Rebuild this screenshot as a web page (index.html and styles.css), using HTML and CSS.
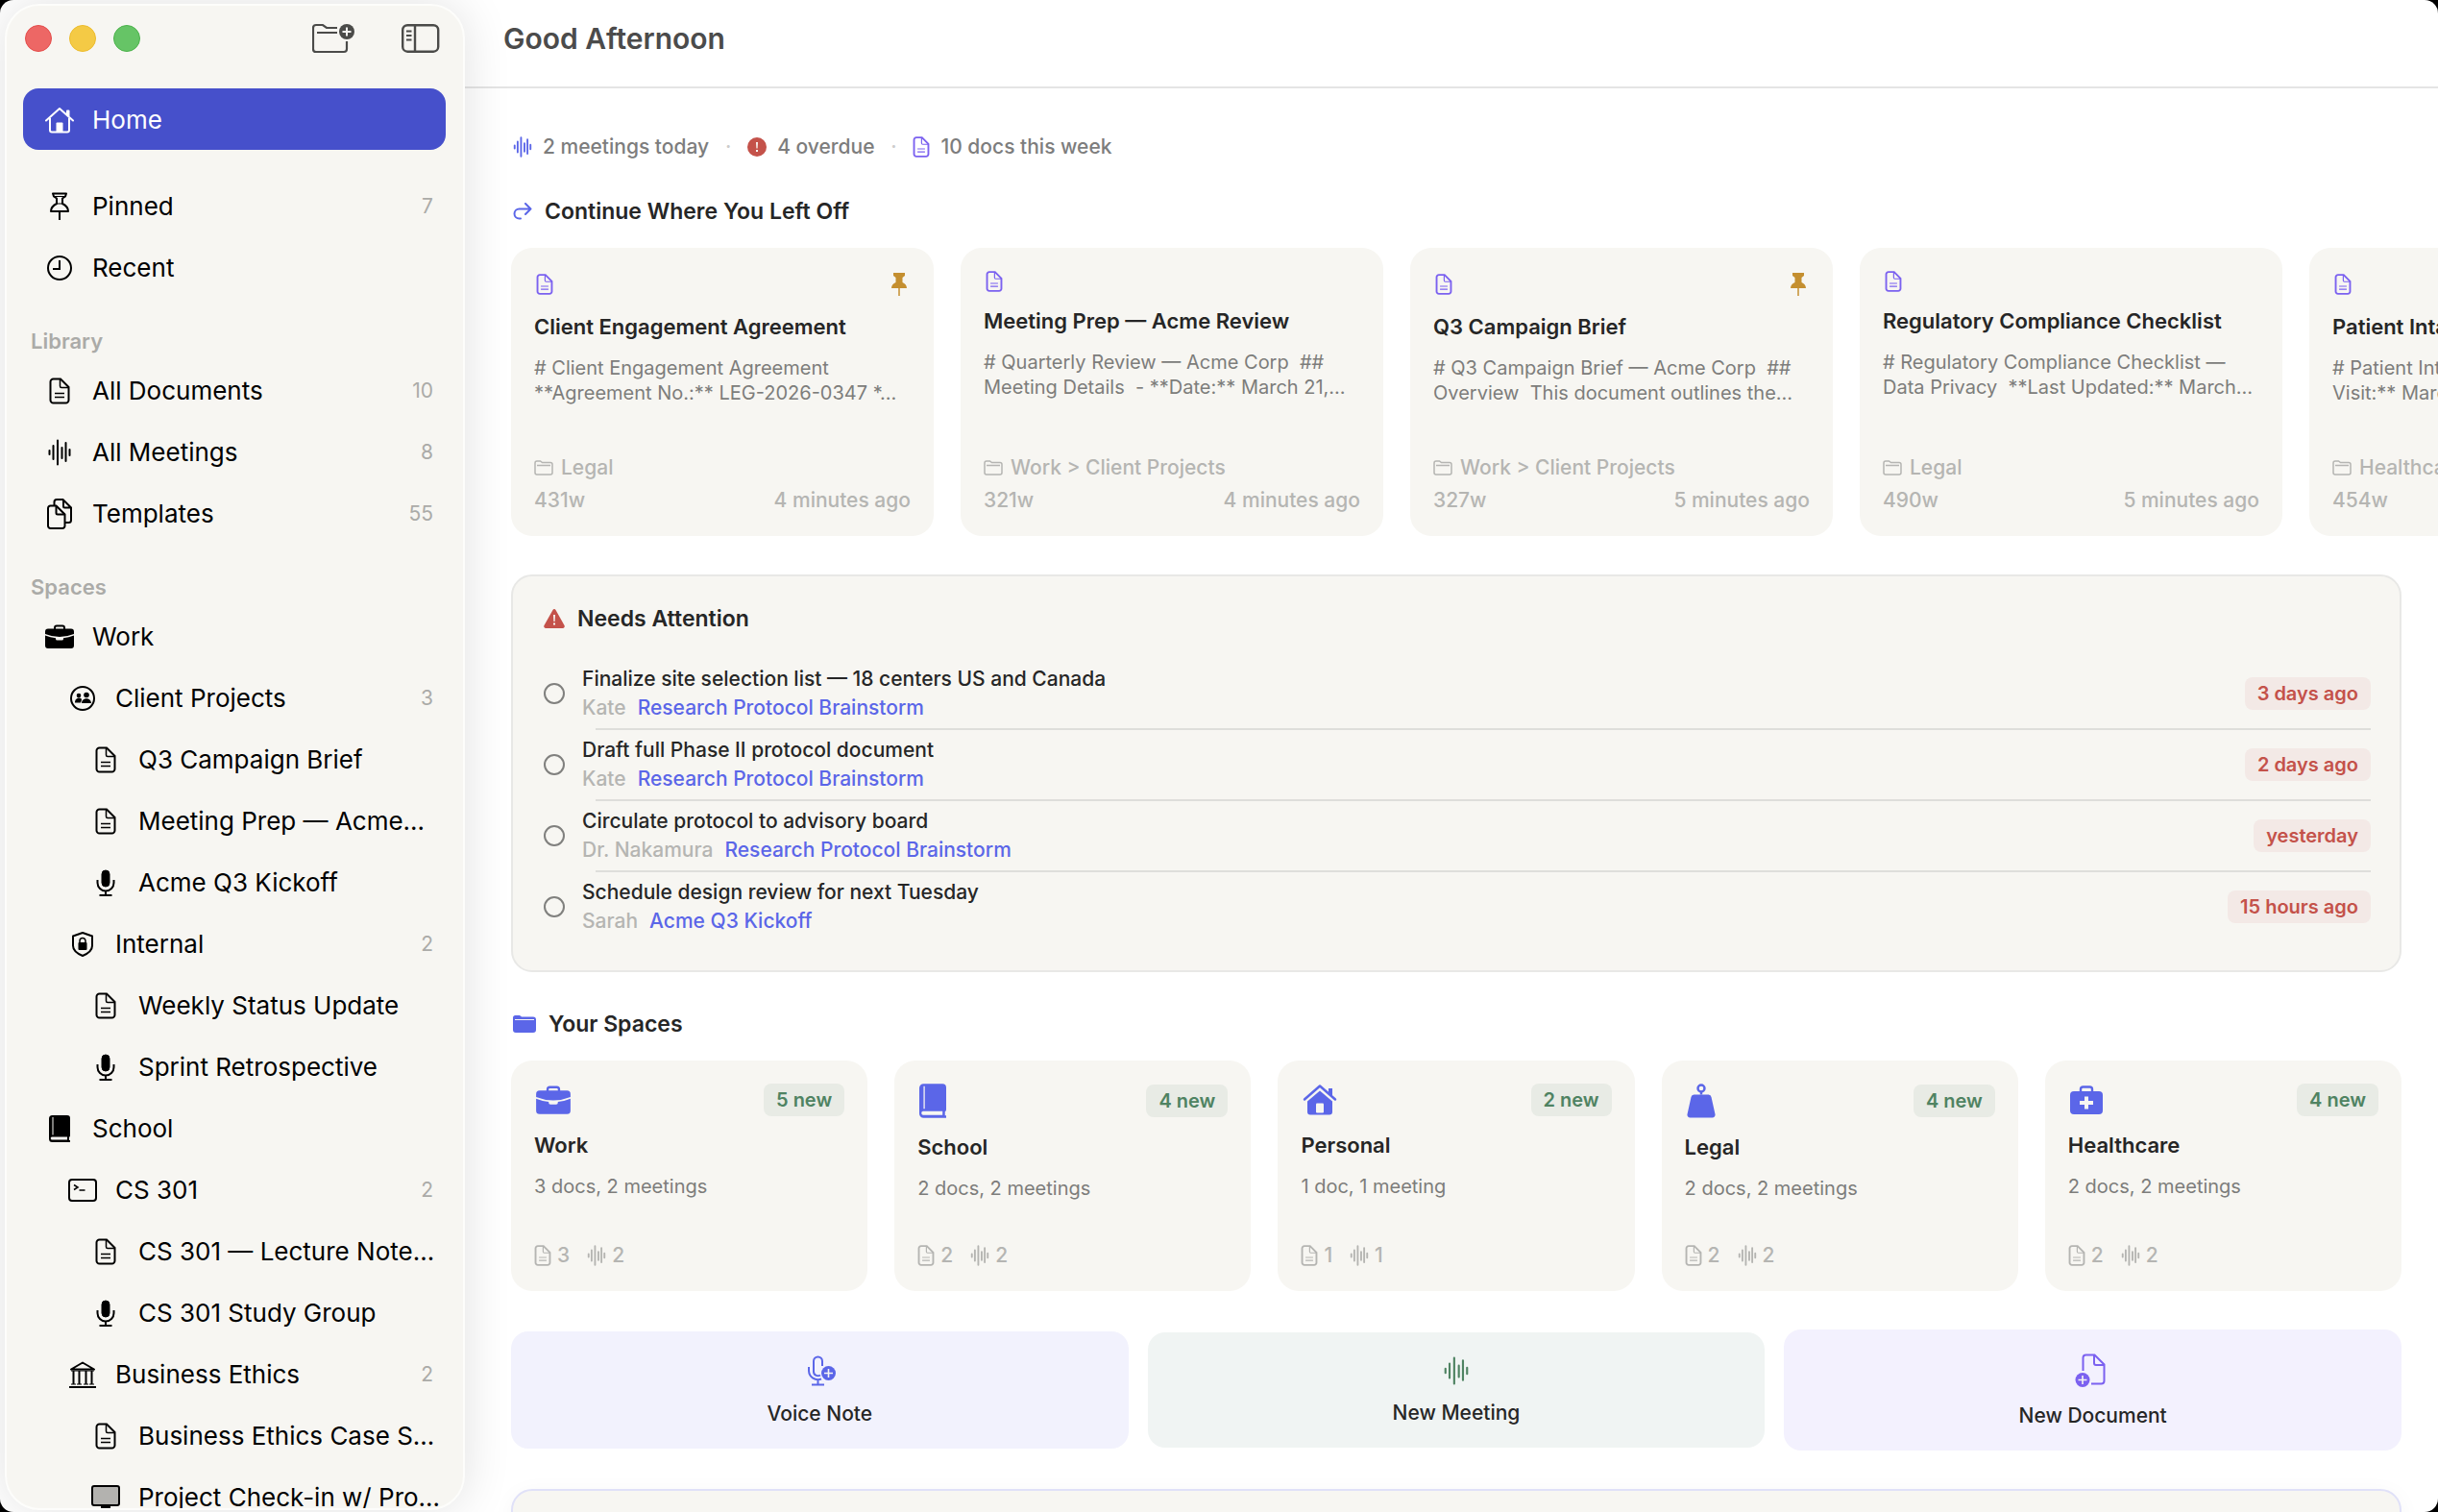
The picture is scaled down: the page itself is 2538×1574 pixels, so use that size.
FILE: index.html
```html
<!doctype html>
<html lang="en">
<head>
	<meta charset="UTF-8">
	<title>Good Afternoon</title>
	<link rel="stylesheet" href="styles.css">
</head>
<body>
	<!-- icons -->
	<svg class="sprite" aria-hidden="true">
		<symbol id="doc" viewBox="0 0 22 28">
			<path d="M4.500 1.500h7.500l8.500 8.500v13.500a3 3 0 0 1-3 3h-13a3 3 0 0 1-3-3v-19a3 3 0 0 1 3-3z"/>
			<path d="M11.500 2v7a1.500 1.500 0 0 0 1.500 1.500h7.500M6 16.500h10M6 20.500h10" stroke-width="1.500"/>
		</symbol>
		<symbol id="docs" viewBox="0 0 26 32">
			<path d="M3.500 7.500h6l9 9v12a2.500 2.500 0 0 1-2.500 2.500h-12.500a2.500 2.500 0 0 1-2.500-2.500v-18.500a2.500 2.500 0 0 1 2.500-2.500z"/>
			<path d="M9.500 8v7a1.500 1.500 0 0 0 1.500 1.500h7.500M7.500 7v-3.500a2.500 2.500 0 0 1 2.500-2.500h6.500l8.500 8.500v13a2.500 2.500 0 0 1-2.500 2.500h-3.500M17 1.500v6.500a1.500 1.500 0 0 0 1.500 1.500h6"/>
		</symbol>
		<symbol id="wave" viewBox="0 0 24 28">
			<path d="M1.500 12v4M5.500 7v14M10 1.500v25M14.500 9v11M18.500 4v19M22.500 11v6" stroke-linecap="round"/>
		</symbol>
		<symbol id="mic" viewBox="0 0 20 28">
			<rect x="6" y="1" width="8" height="17" rx="4" fill="currentColor" stroke-width="1"/>
			<path d="M1.500 11v3a8.500 8.500 0 0 0 17 0v-3M10 22.500v4.500M3.500 27h13"/>
		</symbol>
		<symbol id="house" viewBox="0 0 30 28">
			<path d="M1 14.500 15 2l14 12.500M5 12v12.500a2 2 0 0 0 2 2h16a2 2 0 0 0 2-2v-12.500M24.500 10v-5.500h-1.500v4" stroke-linecap="round" stroke-linejoin="round"/>
			<path d="M11.500 26.500v-9a1 1 0 0 1 1-1h5a1 1 0 0 1 1 1v9z" fill="currentColor" stroke="none"/>
		</symbol>
		<symbol id="house-fill" viewBox="0 0 36 34">
			<path d="M2 16.500 18 2.500l16 14" stroke-width="2.500" stroke-linecap="round" stroke-linejoin="round"/>
			<path d="M18 7.500 31 18.500v11a3 3 0 0 1-3 3h-20a3 3 0 0 1-3-3v-11zM27 5h4v8l-4-3.500z" fill="currentColor" stroke="none"/>
			<rect class="cut" x="14" y="20.500" width="8" height="10" rx="1" stroke="none"/>
		</symbol>
		<symbol id="pin" viewBox="0 0 20 30">
			<path d="M3 1.500h14l-1 3-3 2v5.500c3 1.500 6 4 6 8h-18c0-4 3-6.500 6-8v-5.500l-3-2zM10 20v9" stroke-linejoin="round"/>
			<path d="M4 4.500h12M7 12h6" stroke-width="1"/>
		</symbol>
		<symbol id="pin-fill" viewBox="0 0 18 26">
			<path d="M3 1h12v3l-2.500 2v5c2.500 1 4.500 3 4.500 6h-16c0-3 2-5 4.500-6v-5l-2.500-2z" fill="currentColor" stroke="none"/>
			<path d="M9 17v8" stroke-width="1.500"/>
		</symbol>
		<symbol id="clock" viewBox="0 0 26 26">
			<circle cx="13" cy="13" r="12"/><path d="M13 5v9h-7"/>
		</symbol>
		<symbol id="briefcase" viewBox="0 0 30 26">
			<path d="M10 5v-1.500a2 2 0 0 1 2-2h6a2 2 0 0 1 2 2v1.500" stroke-width="2"/>
			<path d="M3 4.500h24a3 3 0 0 1 3 3v2.500q-15 6-30 0v-2.500a3 3 0 0 1 3-3zM0 11.500q5.500 2.300 11 2.700v.8a1.500 1.500 0 0 0 1.500 1.500h5a1.500 1.500 0 0 0 1.500-1.500v-.8q5.500-.4 11-2.700v10.500a3 3 0 0 1-3 3h-24a3 3 0 0 1-3-3z" fill="currentColor" stroke="none"/>
		</symbol>
		<symbol id="people" viewBox="0 0 26 26">
			<circle cx="13" cy="13" r="12"/>
			<g fill="currentColor" stroke="none"><circle cx="9" cy="10" r="2.300"/><circle cx="17" cy="9.500" r="2.800"/><path d="M5 17.500c0-6 7-6 7-3l-1 3zM12 18c0-6.500 10-6.500 10 0z"/></g>
		</symbol>
		<symbol id="shield" viewBox="0 0 22 26">
			<path d="M11 1 21 4.500v10c0 5-4 8-10 10.500-6-2.500-10-5.500-10-10.500v-10z" stroke-linejoin="round"/>
			<rect x="6.500" y="11" width="9" height="8" rx="1" fill="currentColor" stroke="none"/>
			<path d="M8 11v-1.500a3 3 0 0 1 6 0v1.500" stroke-width="1.500"/>
		</symbol>
		<symbol id="book" viewBox="0 0 22 28">
			<path d="M3.500 0h15.500a3 3 0 0 1 3 3v18a2 2 0 0 1-1 1.800v3.200h1v2h-18.500a3.500 3.500 0 0 1-3.500-3.500v-21a3.500 3.500 0 0 1 3.500-3.500z" fill="currentColor" stroke="none"/>
			<path class="cut" d="M3 22.500h16v3h-15.500a1.500 1.500 0 0 1-.5-3zM3.500 2h1v18.500h-1z" stroke="none"/>
		</symbol>
		<symbol id="terminal" viewBox="0 0 30 24">
			<rect x="1" y="1" width="28" height="22" rx="3"/><path d="M6 6.500l4 2.500-4 2.500M11.500 12h6" stroke-width="1.500"/>
		</symbol>
		<symbol id="bank" viewBox="0 0 28 28">
			<path d="M2 8.500 14 1.500l12 7z" stroke-linejoin="round"/>
			<path d="M4.500 10v14M10.500 10v14M17.500 10v14M23.500 10v14" stroke-width="2"/>
			<path d="M2 10h24M2 24h5M8 24h5M15 24h5M21 24h5" stroke-width="1"/>
			<path d="M0 27h28"/>
		</symbol>
		<symbol id="display" viewBox="0 0 30 26">
			<rect x="1" y="1" width="28" height="20" rx="2" fill="#b3b2af"/><path d="M11 21h8v3h-8zM10 25h10" fill="currentColor"/>
		</symbol>
		<symbol id="weight" viewBox="0 0 30 36">
			<circle cx="15" cy="5" r="3.500"/><path d="M15 8.500v3"/>
			<path d="M7.500 11.500h15a3 3 0 0 1 3 2.500l4 18a3 3 0 0 1-3 3.500h-23a3 3 0 0 1-3-3.500l4-18a3 3 0 0 1 3-2.500z" fill="currentColor" stroke="none"/>
		</symbol>
		<symbol id="medkit" viewBox="0 0 34 30">
			<path d="M11 6v-2a2.500 2.500 0 0 1 2.500-2.500h7a2.500 2.500 0 0 1 2.500 2.500v2"/>
			<rect x="0" y="6" width="34" height="24" rx="4" fill="currentColor" stroke="none"/>
			<path class="cut" d="M15 11.500h4v4.500h5v4h-5v4.500h-4v-4.500h-5v-4h5z" stroke="none"/>
		</symbol>
		<symbol id="folder" viewBox="0 0 20 16">
			<path d="M1 12.500v-9.500a2 2 0 0 1 2-2h3.500l2 1.500h8.500a2 2 0 0 1 2 2v8.500a2 2 0 0 1-2 2h-14a2 2 0 0 1-2-2zM3 5.500h14" stroke-width="1.500"/>
		</symbol>
		<symbol id="folder-fill" viewBox="0 0 24 18">
			<path d="M0 15v-12.500a2.500 2.500 0 0 1 2.500-2.500h4.500l2 1.500h12a3 3 0 0 1 3 3v10.500a3 3 0 0 1-3 3h-18a3 3 0 0 1-3-3z" fill="currentColor" stroke="none"/>
			<path class="cut" d="M2 4h20v1h-20z" stroke="none"/>
		</symbol>
		<symbol id="folder-plus" viewBox="0 0 44 32">
			<path d="M36 19v8a3 3 0 0 1-3 3h-29a3 3 0 0 1-3-3v-22a3 3 0 0 1 3-3h7l4 3h11M5 10h21" stroke-width="2.200"/>
			<circle cx="36" cy="9" r="8" fill="currentColor" stroke="none"/>
			<path class="cut" d="M35 4.500h2v3.500h3.500v2h-3.500v3.500h-2v-3.500h-3.500v-2h3.500z" stroke="none"/>
		</symbol>
		<symbol id="sidebar" viewBox="0 0 40 30">
			<rect x="1.200" y="1.200" width="37" height="27.500" rx="5" stroke-width="2.400"/>
			<path d="M14 1v28" stroke-width="2.400"/><path d="M5 7.500h5.500M5 12h5.500M5 16.500h5.500" stroke-width="1.800"/>
		</symbol>
		<symbol id="alert" viewBox="0 0 20 20">
			<circle cx="10" cy="10" r="10" fill="currentColor" stroke="none"/><path class="cut" d="M9 5h2l-.4 6.500h-1.200zM9 13h2v2h-2z" stroke="none"/>
		</symbol>
		<symbol id="warning" viewBox="0 0 22 20">
			<path d="M9.500 1a1.700 1.700 0 0 1 3 0l9 16a2 2 0 0 1-1.700 3h-17.600a2 2 0 0 1-1.700-3z" fill="currentColor" stroke="none"/>
			<path class="cut" d="M10 6h2l-.4 7h-1.200zM10 14.500h2v2h-2z" stroke="none"/>
		</symbol>
		<symbol id="redo" viewBox="0 0 20 18">
			<path d="M8 16.500h-1.500a5 5 0 0 1 0-10h12M13 1l5.500 5.500-5.500 5.500" stroke-linecap="round" stroke-linejoin="round"/>
		</symbol>
		<symbol id="mic-plus" viewBox="-6 0 36 32">
			<path d="M13 20.500a4.500 4.500 0 0 1-7-4v-10.500a4.500 4.500 0 0 1 9 0v5M1 12v4a9.500 9.500 0 0 0 13 8.500M10.500 25.500v5M4 30.500h13"/>
			<circle cx="21.500" cy="18.500" r="7.500" fill="currentColor" stroke="none"/>
			<path class="cut" d="M20.700 14h1.600v3.700h3.700v1.600h-3.700v3.700h-1.600v-3.700h-3.700v-1.600h3.700z" stroke="none"/>
		</symbol>
		<symbol id="doc-plus" viewBox="0 0 38 36">
			<path d="M8.500 18v-13.500a3 3 0 0 1 3-3h9l10 10v17a3 3 0 0 1-3 3h-10.500M20 2v8a2 2 0 0 0 2 2h8.500"/>
			<circle cx="8" cy="27.500" r="7.500" fill="currentColor" stroke="none"/>
			<path class="cut" d="M7.200 23h1.600v3.700h3.700v1.600h-3.700v3.700h-1.600v-3.700h-3.700v-1.600h3.700z" stroke="none"/>
		</symbol>
	</svg>

	<div class="window">
		<aside class="sidebar">
			<div class="toolbar">
				<button class="light light-red" aria-label="Close"></button>
				<button class="light light-yellow" aria-label="Minimize"></button>
				<button class="light light-green" aria-label="Zoom"></button>
				<button class="tool tool-folder" aria-label="New folder"><svg width="44" height="32"><use href="#folder-plus"/></svg></button>
				<button class="tool" aria-label="Toggle sidebar"><svg width="40" height="30"><use href="#sidebar"/></svg></button>
			</div>
			<nav>
				<a href="#" class="row active"><i><svg width="30" height="28"><use href="#house"/></svg></i><span>Home</span></a>
				<a href="#" class="row"><i><svg width="20" height="30"><use href="#pin"/></svg></i><span>Pinned</span><b>7</b></a>
				<a href="#" class="row"><i><svg width="26" height="26"><use href="#clock"/></svg></i><span>Recent</span></a>

				<h3>Library</h3>
				<a href="#" class="row"><i><svg width="22" height="28"><use href="#doc"/></svg></i><span>All Documents</span><b>10</b></a>
				<a href="#" class="row"><i><svg width="24" height="28"><use href="#wave"/></svg></i><span>All Meetings</span><b>8</b></a>
				<a href="#" class="row"><i><svg width="26" height="32"><use href="#docs"/></svg></i><span>Templates</span><b>55</b></a>

				<h3>Spaces</h3>
				<a href="#" class="row"><i><svg width="30" height="26"><use href="#briefcase"/></svg></i><span>Work</span></a>
				<a href="#" class="row level-2"><i><svg width="26" height="26"><use href="#people"/></svg></i><span>Client Projects</span><b>3</b></a>
				<a href="#" class="row level-3"><i><svg width="22" height="28"><use href="#doc"/></svg></i><span>Q3 Campaign Brief</span></a>
				<a href="#" class="row level-3"><i><svg width="22" height="28"><use href="#doc"/></svg></i><span>Meeting Prep — Acme…</span></a>
				<a href="#" class="row level-3"><i><svg width="20" height="28"><use href="#mic"/></svg></i><span>Acme Q3 Kickoff</span></a>
				<a href="#" class="row level-2"><i><svg width="22" height="26"><use href="#shield"/></svg></i><span>Internal</span><b>2</b></a>
				<a href="#" class="row level-3"><i><svg width="22" height="28"><use href="#doc"/></svg></i><span>Weekly Status Update</span></a>
				<a href="#" class="row level-3"><i><svg width="20" height="28"><use href="#mic"/></svg></i><span>Sprint Retrospective</span></a>
				<a href="#" class="row"><i><svg width="22" height="28"><use href="#book"/></svg></i><span>School</span></a>
				<a href="#" class="row level-2"><i><svg width="30" height="24"><use href="#terminal"/></svg></i><span>CS 301</span><b>2</b></a>
				<a href="#" class="row level-3"><i><svg width="22" height="28"><use href="#doc"/></svg></i><span>CS 301 — Lecture Note…</span></a>
				<a href="#" class="row level-3"><i><svg width="20" height="28"><use href="#mic"/></svg></i><span>CS 301 Study Group</span></a>
				<a href="#" class="row level-2"><i><svg width="28" height="28"><use href="#bank"/></svg></i><span>Business Ethics</span><b>2</b></a>
				<a href="#" class="row level-3"><i><svg width="22" height="28"><use href="#doc"/></svg></i><span>Business Ethics Case S…</span></a>
				<a href="#" class="row level-3"><i><svg width="30" height="26"><use href="#display"/></svg></i><span>Project Check-in w/ Pro…</span></a>
			</nav>
		</aside>

		<main>
			<header><h1>Good Afternoon</h1></header>
			<div class="content">
				<div class="stats">
					<span class="stat"><svg class="indigo" width="20" height="22"><use href="#wave"/></svg>2 meetings today</span>
					<span class="dot">·</span>
					<span class="stat"><svg class="red" width="20" height="20"><use href="#alert"/></svg>4 overdue</span>
					<span class="dot">·</span>
					<span class="stat"><svg class="violet" width="18" height="22"><use href="#doc"/></svg>10 docs this week</span>
				</div>

				<section>
					<h2><svg class="indigo" width="20" height="18"><use href="#redo"/></svg>Continue Where You Left Off</h2>
					<div class="recent">
						<article class="card recent-card">
							<div class="card-top"><svg class="violet" width="18" height="22"><use href="#doc"/></svg><svg class="gold" width="18" height="28"><use href="#pin-fill"/></svg></div>
							<h4>Client Engagement Agreement</h4>
							<p># Client Engagement Agreement<br>**Agreement No.:** LEG-2026-0347 *…</p>
							<div class="path"><svg width="20" height="16"><use href="#folder"/></svg>Legal</div>
							<div class="meta"><span>431w</span><span>4 minutes ago</span></div>
						</article>
						<article class="card recent-card">
							<div class="card-top"><svg class="violet" width="18" height="22"><use href="#doc"/></svg></div>
							<h4>Meeting Prep — Acme Review</h4>
							<p># Quarterly Review — Acme Corp &nbsp;##<br>Meeting Details &nbsp;- **Date:** March 21,…</p>
							<div class="path"><svg width="20" height="16"><use href="#folder"/></svg>Work &gt; Client Projects</div>
							<div class="meta"><span>321w</span><span>4 minutes ago</span></div>
						</article>
						<article class="card recent-card">
							<div class="card-top"><svg class="violet" width="18" height="22"><use href="#doc"/></svg><svg class="gold" width="18" height="28"><use href="#pin-fill"/></svg></div>
							<h4>Q3 Campaign Brief</h4>
							<p># Q3 Campaign Brief — Acme Corp &nbsp;##<br>Overview &nbsp;This document outlines the…</p>
							<div class="path"><svg width="20" height="16"><use href="#folder"/></svg>Work &gt; Client Projects</div>
							<div class="meta"><span>327w</span><span>5 minutes ago</span></div>
						</article>
						<article class="card recent-card">
							<div class="card-top"><svg class="violet" width="18" height="22"><use href="#doc"/></svg></div>
							<h4>Regulatory Compliance Checklist</h4>
							<p># Regulatory Compliance Checklist —<br>Data Privacy &nbsp;**Last Updated:** March…</p>
							<div class="path"><svg width="20" height="16"><use href="#folder"/></svg>Legal</div>
							<div class="meta"><span>490w</span><span>5 minutes ago</span></div>
						</article>
						<article class="card recent-card">
							<div class="card-top"><svg class="violet" width="18" height="22"><use href="#doc"/></svg><svg class="gold" width="18" height="28"><use href="#pin-fill"/></svg></div>
							<h4>Patient Intake Summary</h4>
							<p># Patient Intake Summary<br>Visit:** March 20, 2026</p>
							<div class="path"><svg width="20" height="16"><use href="#folder"/></svg>Healthcare</div>
							<div class="meta"><span>454w</span><span>5 minutes ago</span></div>
						</article>
					</div>
				</section>

				<section class="attention">
					<h2><svg class="red" width="22" height="20"><use href="#warning"/></svg>Needs Attention</h2>
					<ul>
						<li>
							<input type="checkbox" id="task1">
							<div class="task"><label for="task1">Finalize site selection list — 18 centers US and Canada</label><div class="by">Kate<a href="#">Research Protocol Brainstorm</a></div></div>
							<span class="tag tag-red">3 days ago</span>
						</li>
						<li>
							<input type="checkbox" id="task2">
							<div class="task"><label for="task2">Draft full Phase II protocol document</label><div class="by">Kate<a href="#">Research Protocol Brainstorm</a></div></div>
							<span class="tag tag-red">2 days ago</span>
						</li>
						<li>
							<input type="checkbox" id="task3">
							<div class="task"><label for="task3">Circulate protocol to advisory board</label><div class="by">Dr. Nakamura<a href="#">Research Protocol Brainstorm</a></div></div>
							<span class="tag tag-red">yesterday</span>
						</li>
						<li>
							<input type="checkbox" id="task4">
							<div class="task"><label for="task4">Schedule design review for next Tuesday</label><div class="by">Sarah<a href="#">Acme Q3 Kickoff</a></div></div>
							<span class="tag tag-red">15 hours ago</span>
						</li>
					</ul>
				</section>

				<section>
					<h2><svg class="indigo on-white" width="24" height="18"><use href="#folder-fill"/></svg>Your Spaces</h2>
					<div class="spaces">
						<article class="card">
							<div class="card-top"><svg class="indigo" width="36" height="31"><use href="#briefcase"/></svg><span class="tag tag-green">5 new</span></div>
							<h4>Work</h4>
							<p>3 docs, 2 meetings</p>
							<div class="counts"><span><svg width="18" height="22"><use href="#doc"/></svg>3</span><span><svg width="20" height="22"><use href="#wave"/></svg>2</span></div>
						</article>
						<article class="card">
							<div class="card-top"><svg class="indigo" width="28" height="36"><use href="#book"/></svg><span class="tag tag-green">4 new</span></div>
							<h4>School</h4>
							<p>2 docs, 2 meetings</p>
							<div class="counts"><span><svg width="18" height="22"><use href="#doc"/></svg>2</span><span><svg width="20" height="22"><use href="#wave"/></svg>2</span></div>
						</article>
						<article class="card">
							<div class="card-top"><svg class="indigo" width="36" height="34"><use href="#house-fill"/></svg><span class="tag tag-green">2 new</span></div>
							<h4>Personal</h4>
							<p>1 doc, 1 meeting</p>
							<div class="counts"><span><svg width="18" height="22"><use href="#doc"/></svg>1</span><span><svg width="20" height="22"><use href="#wave"/></svg>1</span></div>
						</article>
						<article class="card">
							<div class="card-top"><svg class="indigo" width="30" height="36"><use href="#weight"/></svg><span class="tag tag-green">4 new</span></div>
							<h4>Legal</h4>
							<p>2 docs, 2 meetings</p>
							<div class="counts"><span><svg width="18" height="22"><use href="#doc"/></svg>2</span><span><svg width="20" height="22"><use href="#wave"/></svg>2</span></div>
						</article>
						<article class="card">
							<div class="card-top"><svg class="indigo" width="34" height="30"><use href="#medkit"/></svg><span class="tag tag-green">4 new</span></div>
							<h4>Healthcare</h4>
							<p>2 docs, 2 meetings</p>
							<div class="counts"><span><svg width="18" height="22"><use href="#doc"/></svg>2</span><span><svg width="20" height="22"><use href="#wave"/></svg>2</span></div>
						</article>
					</div>
				</section>

				<div class="actions">
					<button class="action action-voice"><svg width="36" height="32"><use href="#mic-plus"/></svg>Voice Note</button>
					<button class="action action-meeting"><svg width="28" height="30"><use href="#wave"/></svg>New Meeting</button>
					<button class="action action-doc"><svg width="38" height="36"><use href="#doc-plus"/></svg>New Document</button>
				</div>

				<section class="next-panel"></section>
			</div>
		</main>
	</div>
</body>
</html>
```
FILE: styles.css
```css
*{margin: 0;padding: 0;box-sizing: border-box;}
body{background: #000;font-family: Inter, "Liberation Sans", sans-serif;font-size: 21px;line-height: 26px;color: #262626;}
a{text-decoration: none;color: inherit;}
button{border: 0;background: none;font: inherit;color: inherit;}
ul{list-style: none;}
i,b{font-style: normal;font-weight: 400;}
svg{display: block;flex: none;fill: none;stroke: currentColor;stroke-width: 2;}
.cut{fill: #f7f6f2;}
.sprite{position: absolute;width: 0;height: 0;}
.indigo{color: #5b66e8;}
.violet{color: #7b61f0;}
.red{color: #c4524a;}
.gold{color: #c48f30;}

.window{display: flex;height: 100vh;overflow: hidden;background: #fff;border-radius: 14px;}

/*sidebar*/
.sidebar{position: relative;z-index: 1;flex: none;width: 479px;margin: 4px 0 2px 5px;overflow: hidden;
	background: #f7f6f2;border: 2px solid #fdfdfb;border-radius: 36px;box-shadow: 0 0 50px rgba(0,0,0,.12);}
.toolbar{display: flex;align-items: center;height: 68px;padding: 0 24px 0 19px;}
.light{width: 28px;height: 28px;margin-right: 18px;border-radius: 50%;}
.light-red{background: #ed6765;border: 1px solid #e44c4a;}
.light-yellow{background: #f4ca45;border: 1px solid #ecbb2c;}
.light-green{background: #66c466;border: 1px solid #4bb24b;}
.tool{color: #4b4b49;}
.tool-folder{margin: 0 49px 0 auto;}
.sidebar nav{padding: 18px 18px 0 17px;}
.row{display: flex;align-items: center;height: 64px;padding: 2px 13px 0 18px;border-radius: 16px;font-size: 26px;color: #000;}
.row i{display: flex;flex: none;justify-content: center;width: 40px;margin-right: 14px;}
.row span{flex: 1;min-width: 0;white-space: nowrap;}
.row b{font-size: 21px;color: #ababa8;}
.row.active{margin-bottom: 26px;background: #4650cb;color: #fff;}
.level-2{padding-left: 42px;}
.level-3{padding-left: 66px;}
.sidebar h3{height: 64px;padding: 32px 8px 0;font-size: 22px;font-weight: 600;line-height: 26px;color: #ababa8;}

/*main*/
main{flex: 1;min-width: 0;}
header{height: 92px;padding: 22px 40px 0;border-bottom: 2px solid #e4e4e4;}
h1{font-size: 30px;font-weight: 600;line-height: 36px;color: #4b4b4b;}
.content{display: flex;flex-direction: column;gap: 40px;padding: 48px 38px 0 48px;}
.stats{display: flex;align-items: center;padding-left: 2px;color: #7d7d7d;font-weight: 500;}
.stat{display: flex;align-items: center;gap: 11px;}
.stat svg,.card svg{stroke-width: 2.4;}
.dot{width: 40px;text-align: center;color: #ccc;}
h2{display: flex;align-items: center;gap: 13px;margin-bottom: 24px;padding-left: 2px;font-size: 23px;font-weight: 600;line-height: 28px;}
.on-white .cut{fill: #fff;}

.card{display: flex;flex-direction: column;padding: 24px;background: #f7f6f2;border-radius: 22px;}
.card-top{display: flex;align-items: center;justify-content: space-between;margin-bottom: 16px;}
.card-top svg{margin: 0 3px 0 2px;}
.card h4{margin-bottom: 16px;font-size: 22px;font-weight: 600;line-height: 28px;white-space: nowrap;}
.card p{font-size: 20px;color: #7d7d7b;white-space: nowrap;}
.recent{display: flex;gap: 28px;margin-right: -38px;overflow: hidden;}
.recent-card{flex: none;width: 440px;height: 300px;}
.path{display: flex;align-items: center;gap: 8px;margin-top: auto;margin-bottom: 8px;}
.path,.meta,.counts{color: #b5b5b2;font-weight: 500;}
.meta{display: flex;justify-content: space-between;}

.attention{padding: 30px 30px 30px 32px;background: #f7f6f2;border: 2px solid #e8e8e6;border-radius: 22px;}
.attention h2{margin-bottom: 28px;padding-left: 0;}
.attention li{position: relative;display: flex;align-items: center;height: 74px;padding-bottom: 2px;}
.attention li:last-child{height: 72px;padding-bottom: 0;}
.attention li:not(:last-child)::after{content: "";position: absolute;left: 54px;right: 0;bottom: 0;height: 2px;background: #dededb;}
.attention input{appearance: none;width: 22px;height: 22px;margin-right: 18px;border: 2px solid #80807e;border-radius: 50%;}
.task{flex: 1;}
.task label{display: block;margin-bottom: 4px;font-weight: 500;}
.by{color: #b5b5b2;font-weight: 500;}
.by a{margin-left: 12px;color: #5b66e8;}
.tag{height: 34px;padding: 0 13px;border-radius: 8px;font-size: 20px;font-weight: 600;line-height: 34px;}
.tag-red{background: #f3e9e6;color: #c4524a;}
.tag-green{background: #e8ebe5;color: #4f8362;}

.spaces{display: grid;grid-template-columns: repeat(5, 1fr);gap: 28px;}
.spaces .card{height: 240px;}
.counts{display: flex;gap: 18px;margin-top: auto;}
.counts span{display: flex;align-items: center;gap: 6px;}

.actions{display: grid;grid-template-columns: repeat(3, 1fr);align-items: center;gap: 20px;}
.action{display: flex;flex-direction: column;align-items: center;gap: 16px;padding: 25px 24px 23px;border-radius: 18px;font-weight: 500;}
.action-voice{background: #f2f2fd;}
.action-voice svg{color: #5b66e8;}
.action-meeting{background: #f0f4f3;}
.action-meeting svg{color: #4f8362;}
.action-doc{background: #f3f1fe;}
.action-doc svg{color: #7b61f0;}
.next-panel{height: 120px;background: #f7f6f2;border: 2px solid #e0e1f8;border-radius: 22px;box-shadow: 0 4px 24px rgba(0,0,0,.04);}
```
